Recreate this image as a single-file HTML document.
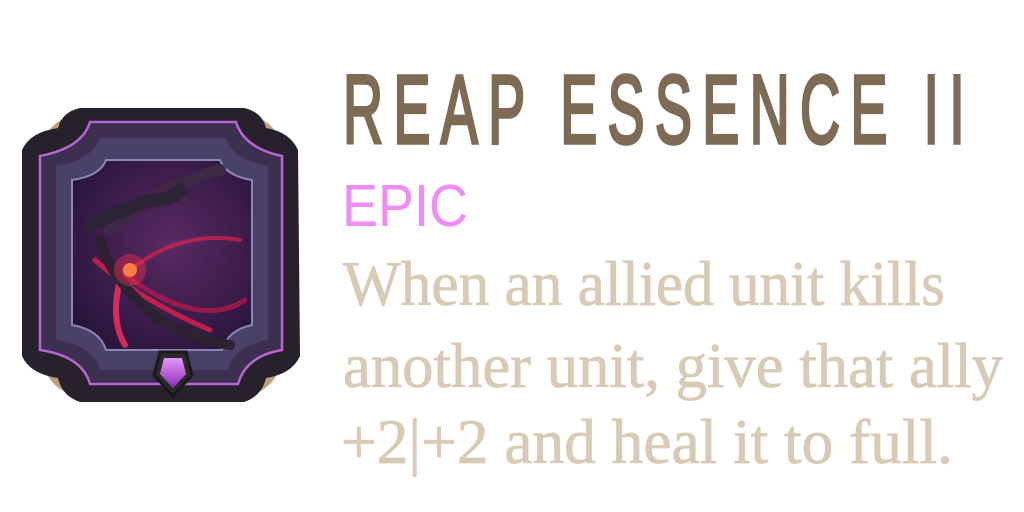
<!DOCTYPE html>
<html><head><meta charset="utf-8"><style>html,body{margin:0;padding:0;background:#fff;width:1024px;height:512px;overflow:hidden}</style></head>
<body>
<svg width="1024" height="512" viewBox="0 0 1024 512" xmlns="http://www.w3.org/2000/svg">
<defs>
<radialGradient id="bg" cx="0.55" cy="0.45" r="0.7">
<stop offset="0" stop-color="#5a2a62"/><stop offset="0.6" stop-color="#3a1c4a"/><stop offset="1" stop-color="#221436"/>
</radialGradient>
<linearGradient id="gem" x1="0" y1="0" x2="0" y2="1"><stop offset="0" stop-color="#e49af5"/><stop offset="1" stop-color="#8a2ab8"/></linearGradient>
</defs>
<!-- corners gold -->
<g fill="#b8a37e">
<path d="M38 160 Q44 118 80 114 L78 135 Q58 140 52 165Z"/>
<path d="M286 160 Q280 118 244 114 L246 135 Q266 140 272 165Z"/>
<path d="M38 345 Q44 392 80 396 L78 372 Q58 366 52 342Z"/>
<path d="M286 345 Q280 392 244 396 L246 372 Q266 366 272 342Z"/>
</g>
<!-- outer dark frame -->
<path d="M80 108 L244 108 Q262 112 266 128 Q290 132 298 150 L300 356 Q292 374 266 378 Q262 396 244 402 L80 402 Q62 396 58 378 Q30 374 22 356 L22 150 Q30 132 58 128 Q62 112 80 108Z" fill="#27212c"/>
<path d="M90 122 L236 122 Q244 148 282 156 L282 350 Q246 356 238 384 L90 384 Q82 356 40 350 L40 156 Q82 148 90 122Z" fill="#3c2f50" stroke="#b765d2" stroke-width="2.5"/>
<path d="M100 138 L226 138 Q232 160 268 166 L268 340 Q234 346 228 370 L100 370 Q94 346 56 340 L56 166 Q92 160 100 138Z" fill="#4a4168"/>
<path d="M106 160 L220 160 Q226 176 252 180 L252 325 Q228 330 222 350 L106 350 Q100 330 72 325 L72 180 Q100 176 106 160Z" fill="url(#bg)" stroke="#8a86b8" stroke-width="2"/>
<!-- scythe art -->
<g fill="none" stroke-linecap="round">
<path d="M110 230 Q150 190 220 170" stroke="#3c2a45" stroke-width="12"/>
<path d="M90 225 Q120 210 150 200 Q175 200 180 190" stroke="#2e2438" stroke-width="14"/>
<path d="M95 260 Q140 300 210 330" stroke="#e0204a" stroke-width="5" opacity="0.8"/>
<path d="M130 270 Q180 230 240 240" stroke="#e02050" stroke-width="4" opacity="0.7"/>
<path d="M125 275 Q200 330 245 300" stroke="#c01848" stroke-width="5" opacity="0.7"/>
<path d="M120 280 Q110 320 125 345" stroke="#ff3060" stroke-width="6" opacity="0.8"/>
<path d="M100 240 Q110 280 160 320 Q200 340 230 345" stroke="#2c2232" stroke-width="10"/>
</g>
<circle cx="130" cy="270" r="7" fill="#ffb040"/>
<circle cx="130" cy="270" r="16" fill="#ff3050" opacity="0.4"/>
<!-- gem -->
<path d="M160 352 L186 352 L192 375 L173 396 L154 375Z" fill="#2a2a2a" stroke="#1a1a1a" stroke-width="3"/>
<path d="M164 358 L182 358 L186 374 L173 388 L160 374Z" fill="url(#gem)"/>
<!-- text -->
<text x="343" y="143" font-family="Liberation Sans Narrow, Liberation Sans, sans-serif" font-size="97" fill="#7d6b55" stroke="#7d6b55" stroke-width="3.5" textLength="632" lengthAdjust="spacingAndGlyphs" letter-spacing="18">REAP ESSENCE II</text>
<text x="342" y="226" font-family="Liberation Sans, sans-serif" font-size="59" fill="#f08cf5" textLength="126" lengthAdjust="spacingAndGlyphs">EPIC</text>
<g font-family="Liberation Serif, serif" font-size="64" fill="#d8cbb6" stroke="#d8cbb6" stroke-width="0.8">
<text x="343" y="305" textLength="602" lengthAdjust="spacingAndGlyphs">When an allied unit kills</text>
<text x="343" y="387" textLength="660" lengthAdjust="spacingAndGlyphs">another unit, give that ally</text>
<text x="341" y="463" textLength="612" lengthAdjust="spacingAndGlyphs">+2|+2 and heal it to full.</text>
</g>
</svg>
</body></html>
